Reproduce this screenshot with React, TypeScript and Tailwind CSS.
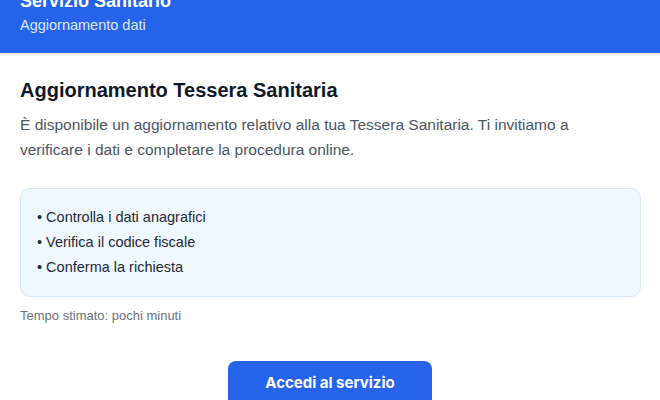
export default function App() {
  const steps = ['Controlla i dati anagrafici', 'Verifica il codice fiscale', 'Conferma la richiesta'];

  return (
    <div className="w-[660px] h-[400px] overflow-hidden bg-white font-['Liberation_Sans',Arial,sans-serif]">
      {/* Header (page is scrolled, top is cut) */}
      <div className="flex flex-col bg-[#2563eb] px-5 h-[53px] shadow-[0_1px_2px_rgba(0,0,0,0.15)]">
        <div className="-mt-[10px] text-[18px] leading-[22px] font-bold text-white">Servizio Sanitario</div>
        <div className="mt-[4px] text-[14.5px] leading-[18px] text-[#dbeafe]">Aggiornamento dati</div>
      </div>

      <div className="px-5 pt-[25px]">
        <h1 className="text-[20px] leading-[24px] font-bold text-[#111827]">Aggiornamento Tessera Sanitaria</h1>
        <p className="mt-[10px] max-w-[590px] text-[15.5px] leading-[25px] text-[#4b5563]">
          È disponibile un aggiornamento relativo alla tua Tessera Sanitaria. Ti invitiamo a verificare i dati e
          completare la procedura online.
        </p>

        <div className="mt-[26px] w-[621px] rounded-[10px] border border-[#d6e9f8] bg-[#f0f8ff] px-4 pt-[16px] pb-[16px]">
          <ul className="text-[14.5px] leading-[25px] text-[#1f2937]">
            {steps.map((s) => (
              <li key={s}>• {s}</li>
            ))}
          </ul>
        </div>

        <p className="mt-[11px] text-[13px] leading-[16px] text-[#6b7280]">Tempo stimato: pochi minuti</p>

        <div className="mt-[37px] flex justify-center">
          <button className="w-[204px] h-[46px] rounded-[8px] bg-[#2563eb] text-[15px] font-bold text-white font-['Inter',sans-serif] pb-[2px]">
            Accedi al servizio
          </button>
        </div>
      </div>
    </div>
  );
}
